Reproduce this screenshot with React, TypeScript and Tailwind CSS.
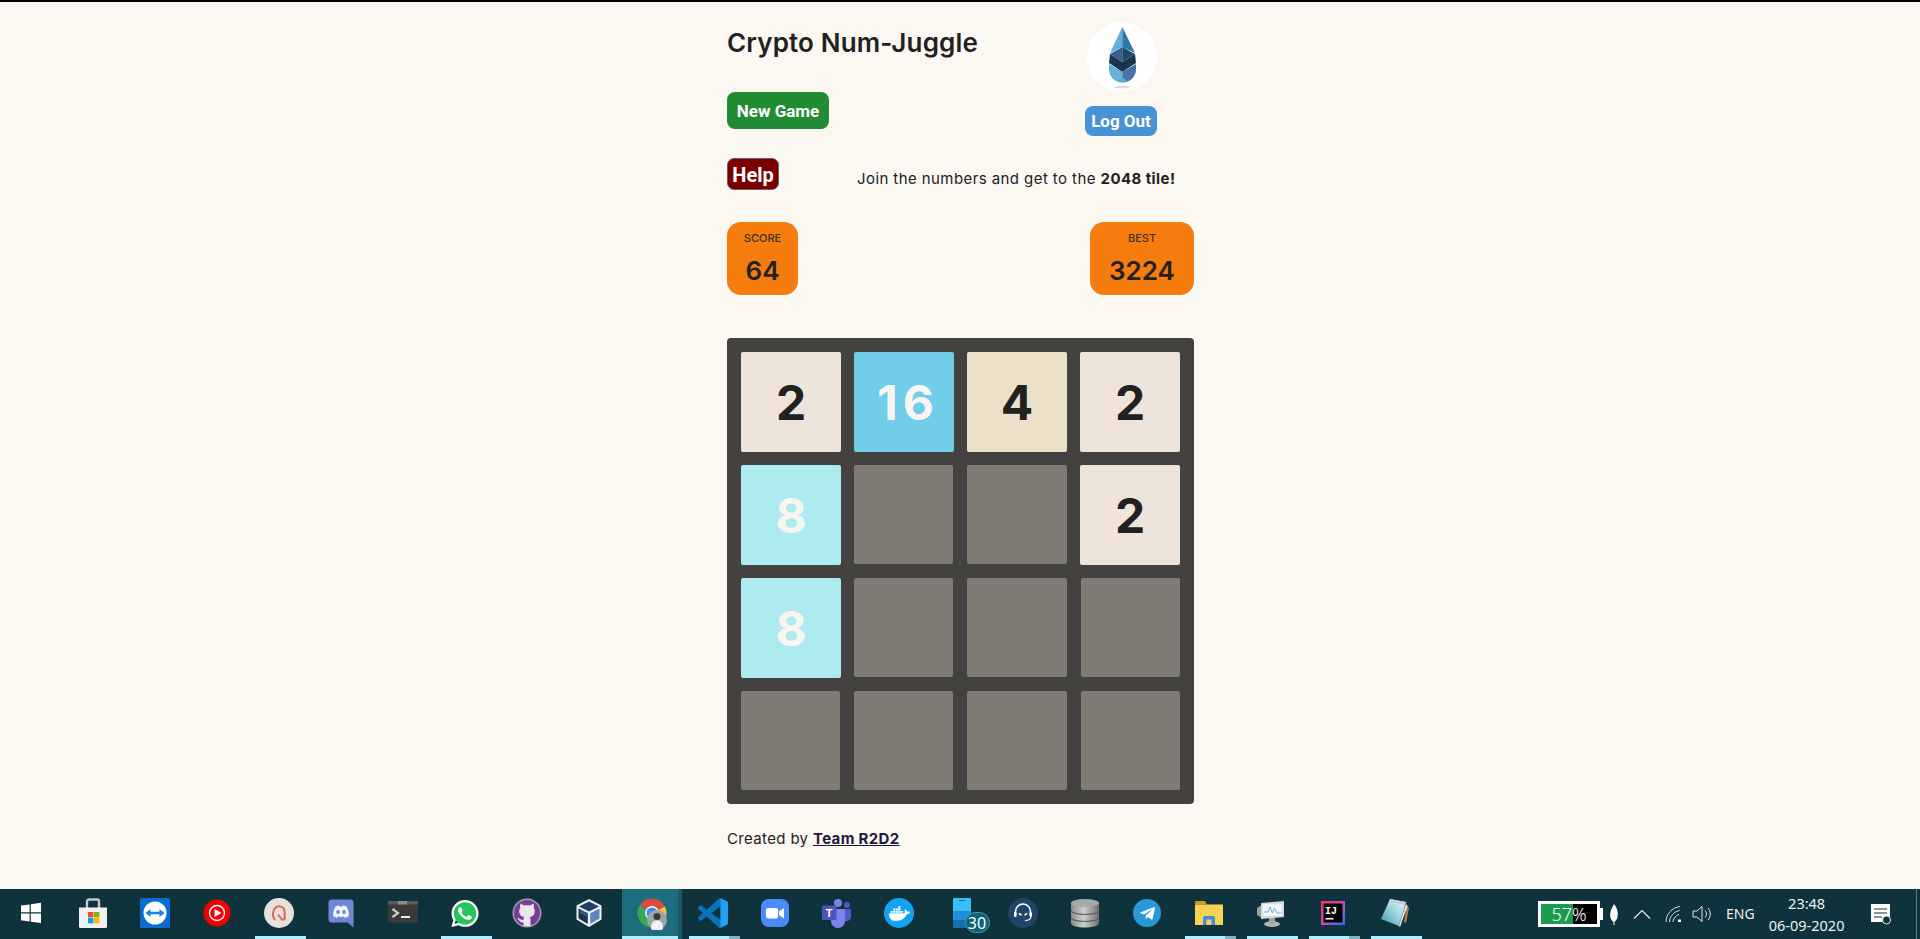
import React from "react";
import { FaWhatsapp, FaDocker, FaTelegramPlane } from "react-icons/fa";

const Svg = ({ children, w = 30, h = 30 }: { children: React.ReactNode; w?: number; h?: number }) => (
  <svg width={w} height={h} viewBox={`0 0 ${w} ${h}`}>{children}</svg>
);

const WinIcon = () => (
  <Svg>
    <path fill="#fff" d="M5 7.600 13.600 6.400V14.300H5ZM14.800 6.200 25 4.800V14.300H14.800ZM5 15.500H13.600V23.500L5 22.300ZM14.800 15.500H25V25L14.800 23.700Z" />
  </Svg>
);
const StoreIcon = () => (
  <Svg>
    <path d="M9 10V3.500A2 2 0 0 1 11 1.500H19A2 2 0 0 1 21 3.500V10" fill="none" stroke="#c8c8c8" strokeWidth="2.400" />
    <path d="M1 9.500H29V28.500A1.500 1.500 0 0 1 27.500 30H2.500A1.500 1.500 0 0 1 1 28.500Z" fill="#f1f1f1" />
    <rect x="10" y="14" width="5.400" height="5.400" fill="#f25022" />
    <rect x="16" y="14" width="5.400" height="5.400" fill="#7fba00" />
    <rect x="10" y="20" width="5.400" height="5.400" fill="#00a4ef" />
    <rect x="16" y="20" width="5.400" height="5.400" fill="#ffb900" />
  </Svg>
);
const TeamViewerIcon = () => (
  <Svg>
    <rect x="0" y="0" width="30" height="30" rx="1.500" fill="#0b6ccf" />
    <circle cx="15" cy="15" r="11.500" fill="#fff" />
    <path d="M5.500 15 10.500 11V13.700H19.500V11L24.500 15 19.500 19V16.300H10.500V19Z" fill="#1b7fe0" />
  </Svg>
);
const YtIcon = () => (
  <Svg>
    <circle cx="15" cy="15" r="13.500" fill="#f40000" />
    <circle cx="15" cy="15" r="7.500" fill="none" stroke="#fff" strokeWidth="1.400" />
    <path d="M12.500 11 19.500 15 12.500 19Z" fill="#fff" />
  </Svg>
);
const AvastIcon = () => (
  <Svg>
    <circle cx="15" cy="15" r="15" fill="#e6e1dd" />
    <path d="M11 22C7 17 9.500 8.500 15 8.200 19.500 8 20.700 12 20.700 15V21.500" fill="none" stroke="#e2644a" strokeWidth="2" />
    <path d="M20.700 21.500H18C16 19.500 14.500 17 14 16.500" fill="none" stroke="#e2644a" strokeWidth="1.800" />
  </Svg>
);
const DiscordIcon = () => (
  <Svg>
    <path d="M5 1.500H25A3 3 0 0 1 27.500 4.500V29.500L21.500 24.500H5A3 3 0 0 1 2.500 21.500V4.500A3 3 0 0 1 5 1.500Z" fill="#6f87d6" />
    <path d="M9.500 8.500C11 7.800 12.500 7.500 13 7.500L13.500 8.500H16.500L17 7.500C17.500 7.500 19 7.800 20.500 8.500 22.200 11.500 23 14.500 22.800 18 21.200 19.200 19.700 19.700 18.800 19.800L17.800 18.500C16 19 14 19 12.200 18.500L11.200 19.800C10.300 19.700 8.800 19.200 7.200 18 7 14.500 7.800 11.500 9.500 8.500Z" fill="#f3f5fc" />
    <circle cx="12" cy="14" r="1.900" fill="#6f87d6" />
    <circle cx="18" cy="14" r="1.900" fill="#6f87d6" />
  </Svg>
);
const TerminalIcon = () => (
  <Svg>
    <rect x="0" y="3" width="30" height="21.500" rx="1" fill="#3a3a3a" />
    <rect x="0" y="3" width="30" height="3.500" fill="#5c5c5c" />
    <rect x="10" y="3" width="9" height="3.500" fill="#8c8c8c" />
    <path d="M4.500 11 10 15 4.500 19" fill="none" stroke="#c9c9c9" strokeWidth="2.200" />
    <rect x="13" y="18" width="9" height="2" fill="#eee" />
  </Svg>
);
const WaIcon = () => (
  <div className="relative w-[30px] h-[30px] flex items-center justify-center">
    <div className="absolute left-[3px] top-[3px] w-[24px] h-[24px] rounded-full bg-[#25c659]" />
    <FaWhatsapp className="relative" size={31} color="#ffffff" />
  </div>
);
const GithubIcon = () => (
  <Svg>
    <circle cx="15" cy="15" r="14.500" fill="#a79cb0" />
    <circle cx="15" cy="15" r="13" fill="#7a3a9c" />
    <path d="M8.500 5.500 12 7.500C13.800 7.100 16.200 7.100 18 7.500L21.500 5.500C22 7.500 22 9 21.700 10 22.500 11 22.800 12 22.800 13.200 22.800 16.800 20.500 18.500 17.800 19 18.300 19.600 18.500 20.300 18.500 21.200V28H11.500V24.300C9 24.800 7.500 23.500 6.500 21.500L5 20.500 6.500 20C8.200 20.800 9 22.300 11.500 22V21.200C11.500 20.300 11.700 19.600 12.200 19 9.500 18.500 7.200 16.800 7.200 13.200 7.200 12 7.500 11 8.300 10 8 9 8 7.500 8.500 5.500Z" fill="#e9e6ea" />
  </Svg>
);
const VboxIcon = () => (
  <Svg>
    <path d="M15 1 27.500 7.500V21.500L15 29 2.500 21.500V7.500Z" fill="#eef1f5" />
    <path d="M15 3.500 25 8.500 15 13.500 5 8.500Z" fill="#1f3f66" />
    <path d="M4.500 10.500 13.800 15.300V26L4.500 20.500Z" fill="#22303f" />
    <path d="M25.500 10.500 16.200 15.300V26L25.500 20.500Z" fill="#5b87bd" />
    <path d="M6 11.500 13 15.200V19L6 15Z" fill="#2a5a8f" />
  </Svg>
);
const ChromeIcon = () => (
  <div className="relative w-[34px] h-[32px]">
    <svg width="32" height="32" viewBox="0 0 32 32" className="absolute left-0 top-0">
      <path d="M16 16 4 8A14.500 14.500 0 0 1 29 9.500Z" fill="#dd4b3e" />
      <path d="M16 16 29 9.500A14.500 14.500 0 0 1 16 30.500Z" fill="#f5c33b" />
      <path d="M16 16V30.500A14.500 14.500 0 0 1 4 8Z" fill="#3aa757" />
      <circle cx="16" cy="16" r="7" fill="#f4f4f4" />
      <circle cx="16" cy="16" r="5.500" fill="#4a85ee" />
    </svg>
    <svg width="20" height="20" viewBox="0 0 20 20" className="absolute left-[11px] top-[13px]">
      <circle cx="10" cy="10" r="10" fill="#9aa6a8" />
      <circle cx="10" cy="6.500" r="3.500" fill="#3d3a38" />
      <path d="M4 19C4 12 6.500 10.500 10 10.500S16 12 16 19A10 10 0 0 1 4 19Z" fill="#f2f2f2" />
    </svg>
  </div>
);
const VscodeIcon = () => (
  <svg width="30" height="30" viewBox="0 0 24 24">
    <path fill="#0a72b8" d="M23.150 2.587 18.210.21a1.494 1.494 0 0 0-1.705.29l-9.460 8.630-4.120-3.128a.999.999 0 0 0-1.276.057L.327 7.261A1 1 0 0 0 .326 8.740L3.899 12 .326 15.260a1 1 0 0 0 .001 1.479L1.650 17.940a.999.999 0 0 0 1.276.057l4.120-3.128 9.460 8.630a1.492 1.492 0 0 0 1.704.29l4.942-2.377A1.500 1.500 0 0 0 24 20.060V3.939a1.500 1.500 0 0 0-.85-1.352zm-5.146 14.861L10.826 12l7.178-5.448v10.896z" />
    <path fill="#22a0ee" d="M18 .15 23.150 2.587A1.500 1.500 0 0 1 24 3.939V20.060A1.500 1.500 0 0 1 23.150 21.410L18 23.850Z" />
  </svg>
);
const ZoomIcon = () => (
  <Svg>
    <rect x="1" y="1" width="28" height="28" rx="8" fill="#4a8cf7" />
    <rect x="6" y="10" width="12" height="10.500" rx="2" fill="#fff" />
    <path d="M19 13.500 24 10V20.500L19 17Z" fill="#fff" />
  </Svg>
);
const TeamsIcon = () => (
  <Svg>
    <circle cx="16" cy="5" r="4" fill="#7b83eb" />
    <circle cx="25" cy="7" r="3" fill="#5059c9" />
    <path d="M21 11H29V20A5 5 0 0 1 21 22Z" fill="#5059c9" />
    <path d="M9 11H23V23A7 7 0 0 1 9 23Z" fill="#7b83eb" />
    <rect x="0" y="7.500" width="14.500" height="14.500" rx="1" fill="#4b53bc" />
    <text x="7.200" y="19" textAnchor="middle" fontFamily="'Liberation Sans', sans-serif" fontWeight="700" fontSize="11" fill="#fff">T</text>
  </Svg>
);
const DockerIcon = () => (
  <div className="w-[30px] h-[30px] rounded-full bg-[#14a3f2] flex items-center justify-center">
    <FaDocker size={21} color="#ffffff" />
  </div>
);
const PhoneIcon = () => (
  <div className="relative w-[18px] h-[30px] ml-[1px]">
    <svg width="18" height="30" viewBox="0 0 18 30" className="absolute left-0 top-0">
      <rect width="18" height="30" rx="1.500" fill="#1a6cab" />
      <path d="M0 1.500A1.500 1.500 0 0 1 1.500 0H16.500A1.500 1.500 0 0 1 18 1.500V13H0Z" fill="#37c0f5" />
      <rect y="13" width="18" height="9" fill="#1e8fdc" />
      <rect x="6" y="2" width="6" height="1" fill="#0f6fa8" />
    </svg>
    <div className="absolute left-[12px] top-[14px] w-[25px] h-[21px] rounded-full bg-[#0d6478] border border-[#4f98a8] flex items-center justify-center text-white text-[16px] font-['Noto_Sans',sans-serif]">
      30
    </div>
  </div>
);
const HeadsetIcon = () => (
  <Svg>
    <circle cx="15" cy="15" r="15" fill="#214566" />
    <path d="M7.500 17V13.500A7.500 7.500 0 0 1 22.500 13.500V17" fill="none" stroke="#fff" strokeWidth="1.600" />
    <path d="M10.500 15C12 14.800 13.300 15.500 14 17.200 12 17.800 11 17 10.500 15ZM19.500 15C18 14.800 16.700 15.500 16 17.200 18 17.800 19 17 19.500 15Z" fill="#fff" />
    <rect x="6" y="14" width="2.500" height="5" rx="1.200" fill="#fff" />
    <rect x="21.500" y="14" width="2.500" height="5" rx="1.200" fill="#fff" />
    <path d="M23 19C22.500 21.500 20 22.500 17 22.500" fill="none" stroke="#fff" strokeWidth="1.200" />
  </Svg>
);
const DbIcon = () => (
  <Svg>
    <defs>
      <linearGradient id="dbg" x1="0" x2="1" y1="0" y2="0">
        <stop offset="0" stopColor="#8e8e8e" />
        <stop offset="0.45" stopColor="#cfcfcf" />
        <stop offset="1" stopColor="#6f6f6f" />
      </linearGradient>
    </defs>
    <path d="M1 5V25C1 28 8 29.500 15 29.500S29 28 29 25V5Z" fill="url(#dbg)" />
    <ellipse cx="15" cy="5" rx="14" ry="4" fill="#a8a8a8" />
    <path d="M1 12C1 15 8 16.500 15 16.500S29 15 29 12" fill="none" stroke="#5e5e5e" strokeWidth="1.200" />
    <path d="M1 19C1 22 8 23.500 15 23.500S29 22 29 19" fill="none" stroke="#5e5e5e" strokeWidth="1.200" />
  </Svg>
);
const TelegramIcon = () => (
  <div className="w-[28px] h-[28px] rounded-full bg-[#2a97d6] flex items-center justify-center">
    <FaTelegramPlane size={17} color="#ffffff" />
  </div>
);
const FolderIcon = () => (
  <Svg>
    <path d="M1 4A1 1 0 0 1 2 3H11L13 6.500H1Z" fill="#d29a1a" />
    <rect x="1" y="6.500" width="28" height="20.500" fill="#f8d254" />
    <path d="M9 27V20A2 2 0 0 1 11 18H19A2 2 0 0 1 21 20V27H17.500V21.500H12.500V27Z" fill="#3f8ed8" />
  </Svg>
);
const MonitorIcon = () => (
  <Svg>
    <path d="M1 10 6 7V20L1 17Z" fill="#9d9d9d" />
    <path d="M5 5 28 3V19L5 21Z" fill="#d8dadc" />
    <rect x="7" y="6" width="19" height="12" fill="#f1f5f8" />
    <path d="M8 14H12L14 9 16.500 15 18.500 10 21 15H25" fill="none" stroke="#6ab0dc" strokeWidth="1" />
    <ellipse cx="16" cy="26" rx="8" ry="3" fill="#b3b3b3" />
    <rect x="13" y="20" width="6" height="5" fill="#a0a0a0" />
  </Svg>
);
const IjIcon = () => (
  <Svg w={24} h={24}>
    <defs>
      <linearGradient id="ijg" x1="0" x2="1" y1="0" y2="1">
        <stop offset="0" stopColor="#fe315d" />
        <stop offset="0.55" stopColor="#c04ec0" />
        <stop offset="1" stopColor="#087cfa" />
      </linearGradient>
    </defs>
    <rect width="24" height="24" fill="url(#ijg)" />
    <rect x="2.500" y="2.500" width="19" height="19" fill="#050505" />
    <text x="4" y="13" fontFamily="'Liberation Mono', monospace" fontWeight="700" fontSize="10" fill="#fff">IJ</text>
    <rect x="4.500" y="17" width="8" height="1.500" fill="#fff" />
  </Svg>
);
const NotepadIcon = () => (
  <Svg>
    <defs>
      <linearGradient id="npg" x1="0" x2="1" y1="1" y2="0">
        <stop offset="0" stopColor="#3f97a8" />
        <stop offset="0.6" stopColor="#a8dde6" />
        <stop offset="1" stopColor="#e8f3f4" />
      </linearGradient>
    </defs>
    <path d="M27 7 29 10 26 25 24 24Z" fill="#b0843c" />
    <path d="M10 1 26 4 19 28 1 21Z" fill="url(#npg)" />
    <path d="M10 1 26 4 25 7 9 3.500Z" fill="#c8ccce" />
    <path d="M26 6 27.500 8 20 29 19 28Z" fill="#e9eeee" />
  </Svg>
);

const Bar = ({ kind }: { kind?: "single" | "double" }) => {
  if (kind === "single") return <div className="h-[3px] w-[51px] ml-[7px] bg-[#aeefff]" />;
  if (kind === "double")
    return (
      <div className="h-[3px] flex ml-[7px]">
        <div className="w-[40px] bg-[#aeefff]" />
        <div className="w-[11px] bg-[#7fb3bf]" />
      </div>
    );
  return <div className="h-[3px]" />;
};

const Btn = ({ children, bar }: { children: React.ReactNode; bar?: "single" | "double" }) => (
  <div className="w-[62px] h-full flex flex-col shrink-0">
    <div className="flex-1 flex items-center justify-center pt-[1px]">{children}</div>
    <Bar kind={bar} />
  </div>
);

const Tile = ({ value, cls }: { value?: number; cls: string }) => (
  <div className={`rounded-[2px] flex items-center justify-center pt-[1px] text-[48px] font-bold leading-none font-['Inter',sans-serif] ${cls}`}>{value}</div>
);

export default function App() {
  const dark = "bg-[#eee4da] text-[#22211f] w-[100px] h-[100px]";
  const empty = "bg-[#7f7c76] w-[99px] h-[99px]";
  return (
    <div className="h-screen flex flex-col overflow-hidden bg-[#fbf8f1] text-[#22211f] font-['Inter',sans-serif]">
      <div className="h-[2px] bg-black shrink-0" />
      <main className="flex-1 ml-[727px] w-[467px]">
        <header className="flex justify-between pt-[20px]">
          <div>
            <h1 className="pt-[2px] text-[26px] leading-[38px] font-semibold tracking-[0.15px]">Crypto Num-Juggle</h1>
            <button className="mt-[30px] block w-[102px] h-[37px] pt-[2px] rounded-[8px] bg-[#218c34] text-white text-[17px] font-bold font-['Roboto',sans-serif]">New Game</button>
          </div>
          <div className="mr-[37px] w-[72px] flex flex-col items-end">
            <div className="w-[70px] h-[70px] rounded-full bg-white">
              <svg width="70" height="70" viewBox="0 0 70 70">
                <path d="M23 32 22 41 35.300 50 49 41 48 32 35.300 40Z" fill="#17364f" />
                <path d="M35.300 5 23 31 35.300 25Z" fill="#63aedb" />
                <path d="M35.300 5 48 31 35.300 25Z" fill="#2f78a8" />
                <path d="M35.300 25 23 32 35.300 40Z" fill="#3b5f8c" />
                <path d="M35.300 25 48 32 35.300 40Z" fill="#1c4a68" />
                <path d="M22 42 35.300 50V60.500C28 60.500 22 55 22 47Z" fill="#66b0dc" />
                <path d="M35.300 50 49 42V47C49 55 43 60.500 35.300 60.500Z" fill="#4a72a6" />
                <path d="M30 58.500 35.300 55 40 58.500C38 60.800 32 60.800 30 58.500Z" fill="#55b3c8" />
                <ellipse cx="35" cy="65" rx="8" ry="1.300" fill="#dcdcdc" />
              </svg>
            </div>
            <button className="mt-[14px] w-[72px] h-[30px] pt-[1px] rounded-[8px] bg-[#4692d5] text-white text-[17px] font-bold font-['Roboto',sans-serif]">Log Out</button>
          </div>
        </header>
        <div className="flex items-start mt-[22px]">
          <button className="w-[52px] h-[32px] pt-[1px] rounded-[7px] bg-[#7a0000] border border-[#666] text-white text-[20px] font-bold font-['Roboto',sans-serif]">Help</button>
          <p className="ml-[78px] mt-[10px] text-[15px] leading-[22px] tracking-[0.42px]">
            Join the numbers and get to the <strong className="font-bold">2048 tile!</strong>
          </p>
        </div>
        <div className="flex justify-between mt-[32px]">
          <div className="w-[71px] h-[73px] rounded-[14px] bg-[#f57c0d] text-center pt-[9px]">
            <div className="text-[11px] leading-[15px] font-medium text-[#3a3128]">SCORE</div>
            <div className="text-[26px] leading-[38px] font-semibold mt-[6px]">64</div>
          </div>
          <div className="w-[104px] h-[73px] rounded-[14px] bg-[#f57c0d] text-center pt-[9px]">
            <div className="text-[11px] leading-[15px] font-medium text-[#3a3128]">BEST</div>
            <div className="text-[26px] leading-[38px] font-semibold mt-[6px]">3224</div>
          </div>
        </div>
        <section className="mt-[43px] w-[467px] h-[466px] rounded-[4px] bg-[#434240] pt-[14px] pl-[14px] grid grid-cols-[100px_100px_100px_100px] grid-rows-[100px_100px_100px_100px] gap-[13px]">
          <Tile value={2} cls={dark} />
          <Tile value={16} cls="bg-[#71cde9] text-[#f9f6f2] w-[100px] h-[100px] pl-[8px] tracking-[5px]" />
          <Tile value={4} cls="bg-[#ede0c8] text-[#22211f] w-[100px] h-[100px]" />
          <Tile value={2} cls={dark} />
          <Tile value={8} cls="bg-[#adebee] text-[#f9f6f2] w-[100px] h-[100px]" />
          <Tile cls={empty} />
          <Tile cls="bg-[#7f7c76] w-[100px] h-[99px]" />
          <Tile value={2} cls={dark} />
          <Tile value={8} cls="bg-[#adebee] text-[#f9f6f2] w-[100px] h-[100px]" />
          <Tile cls={empty} />
          <Tile cls="bg-[#7f7c76] w-[100px] h-[99px]" />
          <Tile cls={`${empty} ml-[1px]`} />
          <Tile cls={empty} />
          <Tile cls={empty} />
          <Tile cls="bg-[#7f7c76] w-[100px] h-[99px]" />
          <Tile cls={`${empty} ml-[1px]`} />
        </section>
        <p className="mt-[24px] text-[15px] leading-[22px] tracking-[0.35px]">
          Created by <a className="font-bold underline text-[#1f1a3a]">Team R2D2</a>
        </p>
      </main>
      <footer className="h-[50px] shrink-0 bg-[#0e333c] flex text-white font-['Noto_Sans',sans-serif]">
        <Btn><WinIcon /></Btn>
        <Btn><StoreIcon /></Btn>
        <Btn><TeamViewerIcon /></Btn>
        <Btn><YtIcon /></Btn>
        <Btn bar="single"><AvastIcon /></Btn>
        <Btn><DiscordIcon /></Btn>
        <Btn><TerminalIcon /></Btn>
        <Btn bar="single"><WaIcon /></Btn>
        <Btn><GithubIcon /></Btn>
        <Btn><VboxIcon /></Btn>
        <div className="w-[62px] h-full shrink-0 flex">
          <div className="ml-[2px] w-[56px] h-full bg-[#1d6d7d] flex flex-col">
            <div className="flex-1 flex items-center justify-center pl-[6px] pt-[1px]"><ChromeIcon /></div>
            <div className="h-[3px] bg-[#aeefff]" />
          </div>
          <div className="w-[4px] h-full bg-[#17586a]" />
        </div>
        <Btn bar="double"><VscodeIcon /></Btn>
        <Btn><ZoomIcon /></Btn>
        <Btn><TeamsIcon /></Btn>
        <Btn><DockerIcon /></Btn>
        <Btn><PhoneIcon /></Btn>
        <Btn><HeadsetIcon /></Btn>
        <Btn><DbIcon /></Btn>
        <Btn><TelegramIcon /></Btn>
        <Btn bar="double"><FolderIcon /></Btn>
        <Btn bar="single"><MonitorIcon /></Btn>
        <Btn bar="double"><IjIcon /></Btn>
        <Btn bar="single"><NotepadIcon /></Btn>
        <div className="ml-[112px] flex items-center h-full">
          <div className="flex items-center">
            <div className="w-[62px] h-[26px] border-[3px] border-white bg-black flex relative">
              <div className="w-[57%] bg-[#1b9c50]" />
              <span className="absolute inset-0 flex items-center justify-center text-[18px] font-light leading-none">57%</span>
            </div>
            <div className="w-[3px] h-[12px] bg-white" />
          </div>
          <svg className="ml-[6px]" width="10" height="24" viewBox="0 0 10 24">
            <path d="M5 2C8 6 9.500 10 8.500 15 8 18 6 19 5.500 20V23H4.500V20C2 18 0.500 15 1.500 10 2 7 4 5 5 2Z" fill="#fff" />
          </svg>
          <svg className="ml-[14px]" width="18" height="12" viewBox="0 0 18 12">
            <path d="M1 10.500 9 2.500 17 10.500" fill="none" stroke="#e8e8e8" strokeWidth="1.200" />
          </svg>
          <svg className="ml-[14px]" width="18" height="18" viewBox="0 0 18 18">
            <path d="M1 17C1 9 7 2.500 15 1.500M4.500 17C4.500 11.500 9 6.500 14.500 5.500M8 17C8 14.500 10 11 14 9.500" fill="none" stroke="#d8d8d8" strokeWidth="1" />
            <rect x="13" y="14.500" width="3" height="2.500" fill="#fff" />
          </svg>
          <svg className="ml-[9px]" width="22" height="20" viewBox="0 0 22 20">
            <path d="M1 7H5L10 2.500V17.500L5 13H1Z" fill="none" stroke="#e8e8e8" strokeWidth="1" />
            <path d="M13 6.500C15 8.500 15 11.500 13 13.500M16 4C19 7.500 19 12.500 16 16" fill="none" stroke="#e8e8e8" strokeWidth="1" />
          </svg>
          <span className="ml-[12px] text-[14px] leading-none text-[#f0f0f0]">ENG</span>
          <div className="ml-[14px] w-[76px] flex flex-col items-center text-[14.500px] leading-[22px] text-[#f0f0f0]">
            <span>23:48</span>
            <span>06-09-2020</span>
          </div>
          <svg className="ml-[25px]" width="22" height="22" viewBox="0 0 22 22">
            <path d="M1 1H20V15L16 19H1Z" fill="#fff" />
            <path d="M4 6H17M4 10H17M4 14H12" stroke="#0e333c" strokeWidth="1.200" />
            <circle cx="16.500" cy="17" r="4" fill="#0e333c" stroke="#e8e8e8" strokeWidth="1" />
          </svg>
          <div className="ml-[24px] w-px h-[50px] bg-[#5d7e86]" />
        </div>
      </footer>
    </div>
  );
}
